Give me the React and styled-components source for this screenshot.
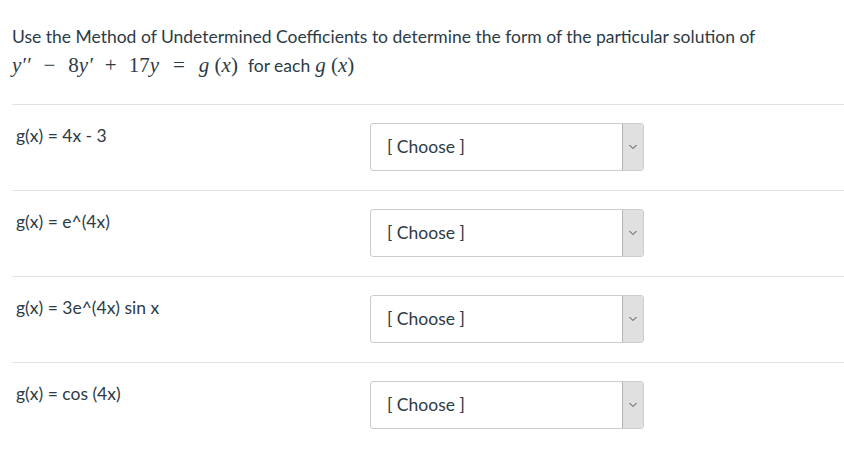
import React from "react";
import styled, { createGlobalStyle } from "styled-components";

const Global = createGlobalStyle`
  html, body { margin: 0; padding: 0; background: #fff; }
  body { font-family: Lato, "Open Sans", sans-serif; color: #2d3b45; }
`;

const Page = styled.div`
  padding: 26px 0 0 12px;
  width: 832px;
`;

const Prompt = styled.div`
  font-size: 17.5px;
  line-height: 22px;
  color: #2d3b45;
`;

const MathLine = styled.div`
  display: flex;
  align-items: baseline;
  margin-top: 5px;
  height: 27px;
  font-size: 17.5px;
`;

const M = styled.span`
  font-family: "Liberation Serif", "Times New Roman", serif;
  font-style: ${(p) => (p.$up ? "normal" : "italic")};
  font-size: 21px;
  margin: 0 ${(p) => p.$gap || 0}px;
  white-space: pre;
`;

const Word = styled.span`
  margin: 0 5px 0 10px;
`;

const Answers = styled.div`
  margin-top: 24px;
`;

const Row = styled.div`
  display: flex;
  align-items: flex-start;
  border-top: 1px solid #e1e4e6;
  height: 86px;
  padding-top: 17px;
  box-sizing: border-box;
`;

const Label = styled.div`
  width: 358px;
  font-size: 17.5px;
  line-height: 28px;
  padding-left: 4px;
  box-sizing: border-box;
  color: #2d3b45;
`;

const Select = styled.div`
  display: flex;
  width: 274px;
  height: 48px;
  margin-top: 1px;
  border: 1px solid #c7cdd1;
  border-radius: 3px;
  box-sizing: border-box;
  overflow: hidden;
  background: #fff;
`;

const Value = styled.div`
  flex: 1;
  display: flex;
  align-items: center;
  padding-left: 16px;
  padding-bottom: 1px;
  font-size: 17.5px;
  color: #2d3b45;
`;

const Arrow = styled.div`
  width: 20px;
  display: flex;
  align-items: center;
  justify-content: center;
  background: #e0e0e0;
  border-left: 1px solid #b4b4b4;
`;

const rows = ["g(x) = 4x - 3", "g(x) = e^(4x)", "g(x) = 3e^(4x) sin x", "g(x) = cos (4x)"];

export default function App() {
  return (
    <Page>
      <Global />
      <Prompt>Use the Method of Undetermined Coefficients to determine the form of the particular solution of</Prompt>
      <MathLine>
        <M>y′′</M>
        <M $up $gap={13}>−</M>
        <M $up>8</M><M>y′</M>
        <M $up $gap={12}>+</M>
        <M $up>17</M><M>y</M>
        <M $up $gap={14}>=</M>
        <M>g</M><M $up> (</M><M>x</M><M $up>)</M>
        <Word>for each</Word>
        <M>g</M><M $up> (</M><M>x</M><M $up>)</M>
      </MathLine>
      <Answers>
        {rows.map((r) => (
          <Row key={r}>
            <Label>{r}</Label>
            <Select>
              <Value>[ Choose ]</Value>
              <Arrow>
                <svg width="10" height="6" viewBox="0 0 10 6">
                  <path d="M1.5 1 L5 4.5 L8.5 1" fill="none" stroke="#444" strokeWidth="1" />
                </svg>
              </Arrow>
            </Select>
          </Row>
        ))}
      </Answers>
    </Page>
  );
}
